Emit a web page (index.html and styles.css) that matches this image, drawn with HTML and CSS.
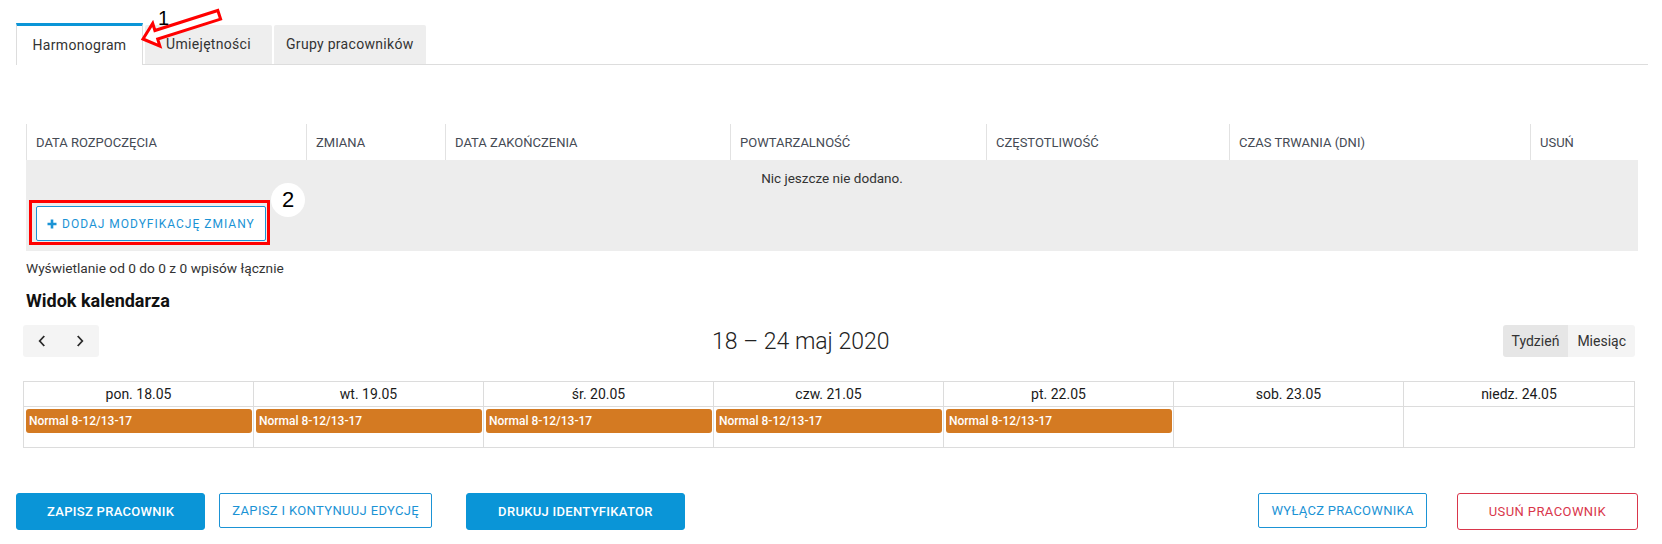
FILE: index.html
```html
<!DOCTYPE html>
<html lang="pl">
<head>
<meta charset="utf-8">
<title>Pracownik – harmonogram</title>
<link rel="stylesheet" href="styles.css">
</head>
<body>
<div class="page">
  <nav class="tabs">
    <a class="tab active">Harmonogram</a>
    <a class="tab">Umiejętności</a>
    <a class="tab">Grupy pracowników</a>
  </nav>

  <section class="schedule">
    <div class="thead">
      <div class="th">DATA ROZPOCZĘCIA</div>
      <div class="th">ZMIANA</div>
      <div class="th">DATA ZAKOŃCZENIA</div>
      <div class="th">POWTARZALNOŚĆ</div>
      <div class="th">CZĘSTOTLIWOŚĆ</div>
      <div class="th">CZAS TRWANIA (DNI)</div>
      <div class="th">USUŃ</div>
    </div>
    <div class="tbody">
      <div class="empty">Nic jeszcze nie dodano.</div>
      <div class="add-row">
        <button class="btn-add"><svg class="plus" viewBox="0 0 10 10" width="10" height="10"><path d="M5 0.5V9.5M0.5 5H9.5" stroke="currentColor" stroke-width="2.6" fill="none"/></svg>DODAJ MODYFIKACJĘ ZMIANY</button>
        <span class="mark-box"></span>
        <span class="mark-num">2</span>
      </div>
    </div>
    <div class="info">Wyświetlanie od 0 do 0 z 0 wpisów łącznie</div>
  </section>

  <h2 class="cal-heading">Widok kalendarza</h2>

  <div class="toolbar">
    <div class="nav-group">
      <button class="nav-btn"><svg viewBox="0 0 8 12" width="8" height="12"><path d="M6.3 1L1.7 6L6.3 11" fill="none" stroke="#2b2b2b" stroke-width="1.8"/></svg></button>
      <button class="nav-btn"><svg viewBox="0 0 8 12" width="8" height="12"><path d="M1.7 1L6.3 6L1.7 11" fill="none" stroke="#2b2b2b" stroke-width="1.8"/></svg></button>
    </div>
    <div class="range">18 – 24 maj 2020</div>
    <div class="view-group">
      <button class="view-btn active">Tydzień</button>
      <button class="view-btn">Miesiąc</button>
    </div>
  </div>

  <div class="calendar">
    <div class="day-head">pon. 18.05</div>
    <div class="day-head">wt. 19.05</div>
    <div class="day-head">śr. 20.05</div>
    <div class="day-head">czw. 21.05</div>
    <div class="day-head">pt. 22.05</div>
    <div class="day-head">sob. 23.05</div>
    <div class="day-head">niedz. 24.05</div>
    <div class="day-cell"><div class="event">Normal 8-12/13-17</div></div>
    <div class="day-cell"><div class="event">Normal 8-12/13-17</div></div>
    <div class="day-cell"><div class="event">Normal 8-12/13-17</div></div>
    <div class="day-cell"><div class="event">Normal 8-12/13-17</div></div>
    <div class="day-cell"><div class="event">Normal 8-12/13-17</div></div>
    <div class="day-cell"></div>
    <div class="day-cell"></div>
  </div>

  <div class="actions">
    <div class="actions-left">
      <button class="btn primary">ZAPISZ PRACOWNIK</button>
      <button class="btn outline continue">ZAPISZ I KONTYNUUJ EDYCJĘ</button>
      <button class="btn primary print">DRUKUJ IDENTYFIKATOR</button>
    </div>
    <div class="actions-right">
      <button class="btn outline disable">WYŁĄCZ PRACOWNIKA</button>
      <button class="btn danger">USUŃ PRACOWNIK</button>
    </div>
  </div>

  <svg class="mark-arrow" viewBox="0 0 240 60" width="240" height="60"><polygon points="143,39 159.9,46.2 157.7,39.1 220.6,19.1 217.8,10.5 154.9,30.5 152.7,23.4" fill="#fff" stroke="#f00" stroke-width="3" stroke-linejoin="miter"/></svg>
  <span class="mark-one">1</span>
</div>
</body>
</html>
```

FILE: styles.css
```css
* {
  box-sizing: border-box;
}

body {
  margin: 0;
  background: #fff;
  color: #333;
  font-family: Roboto, "Noto Sans", Arial, sans-serif;
  font-size: 14px;
}

button {
  font: inherit;
  cursor: pointer;
}

.page {
  position: relative;
  padding: 23px 14px 0 16px;
}

/* Tabs */
.tabs {
  display: flex;
  align-items: flex-end;
  gap: 2px;
  border-bottom: 1px solid #ddd;
}

.tab {
  display: flex;
  align-items: center;
  justify-content: center;
  min-width: 127px;
  height: 39px;
  padding: 0 12px 1px;
  background: #eeeeee;
  color: #333;
  font-size: 14px;
  letter-spacing: 0.3px;
  border-radius: 2px 2px 0 0;
}

.tab.active {
  height: 42px;
  margin-bottom: -1px;
  padding-bottom: 2px;
  background: #fff;
  border-top: 3px solid #0a95d7;
  border-left: 1px solid #ddd;
  border-right: 1px solid #ddd;
  border-radius: 0;
}

/* Schedule table */
.schedule {
  margin: 59px 10px 0 10px;
}

.thead {
  display: grid;
  grid-template-columns: 280px 139px 285px 256px 243px 301px 108px;
  height: 36px;
}

.th {
  display: flex;
  align-items: center;
  padding: 0 9px;
  border-left: 1px solid #e2e2e2;
  color: #454a54;
  font-size: 13px;
}

.tbody {
  background: #ededed;
  padding-top: 10px;
}

.empty {
  text-align: center;
  line-height: 17px;
  font-size: 13.5px;
  color: #333;
}

.add-row {
  position: relative;
  margin-top: 19px;
  padding: 0 10px 10px;
}

.btn-add {
  display: inline-flex;
  align-items: center;
  gap: 5px;
  width: 230px;
  height: 35px;
  padding: 0 10px;
  background: #fff;
  border: 1px solid #1b93d5;
  border-radius: 2px;
  color: #1b93d5;
  font-size: 12px;
  letter-spacing: 1px;
}

.plus {
  display: block;
}

.mark-box {
  position: absolute;
  left: 3px;
  top: -6px;
  width: 241px;
  height: 45px;
  border: 3px solid #f00;
}

.mark-num {
  position: absolute;
  left: 245px;
  top: -23px;
  width: 34px;
  height: 34px;
  border-radius: 50%;
  background: #fff;
  display: flex;
  align-items: center;
  justify-content: center;
  font-family: "Liberation Sans", Arial, sans-serif;
  font-size: 22px;
  color: #000;
}

.info {
  margin-top: 7px;
  line-height: 20px;
  font-size: 13.7px;
  color: #333;
}

/* Calendar */
.cal-heading {
  margin: 11px 0 0 10px;
  font-size: 18px;
  line-height: 24px;
  font-weight: 700;
  color: #111;
}

.toolbar {
  display: flex;
  align-items: center;
  justify-content: space-between;
  margin: 12px 13px 0 7px;
  height: 32px;
}

.nav-group,
.view-group {
  display: flex;
  border-radius: 3px;
  overflow: hidden;
}

.nav-btn {
  display: flex;
  align-items: center;
  justify-content: center;
  width: 38px;
  height: 32px;
  padding: 0;
  border: 0;
  background: #f4f4f4;
}

.range {
  font-size: 23px;
  font-weight: 300;
  color: #222;
}

.view-btn {
  height: 32px;
  padding: 0 9px;
  border: 0;
  background: #f4f4f4;
  color: #333;
  font-size: 14px;
}

.view-btn.active {
  background: #e6e6e6;
}

.calendar {
  display: grid;
  grid-template-columns: repeat(7, 1fr);
  width: 1612px;
  margin: 24px 0 0 7px;
  border: 1px solid #dcdcdc;
}

.day-head {
  height: 25px;
  display: flex;
  align-items: center;
  justify-content: center;
  border-right: 1px solid #dcdcdc;
  border-bottom: 1px solid #dcdcdc;
  font-size: 14px;
  color: #1a1a1a;
}

.day-cell {
  height: 40px;
  padding: 2px 1px 0 2px;
  border-right: 1px solid #dcdcdc;
}

.day-head:nth-child(7),
.day-cell:last-child {
  border-right: 0;
}

.event {
  height: 24px;
  display: flex;
  align-items: center;
  padding: 0 3px;
  background: #d47a22;
  border-radius: 3px;
  color: #fff;
  font-size: 12px;
  font-weight: 500;
}

/* Actions */
.actions {
  display: flex;
  justify-content: space-between;
  align-items: flex-start;
  margin: 45px 10px 0 0;
}

.actions-left,
.actions-right {
  display: flex;
  align-items: flex-start;
}

.btn {
  height: 37px;
  padding: 0 30px;
  border-radius: 3px;
  font-size: 13px;
  font-weight: 500;
  letter-spacing: 0.3px;
}

.btn.primary {
  background: #0a95d7;
  border: 1px solid #0a95d7;
  color: #fff;
}

.btn.outline {
  height: 35px;
  padding: 0 12px;
  background: #fff;
  border: 1px solid #1b93d5;
  border-radius: 2px;
  color: #1b93d5;
  font-weight: 400;
}

.btn.continue {
  margin-left: 14px;
  letter-spacing: 0.35px;
}

.btn.print {
  margin-left: 34px;
  padding: 0 31px;
}

.btn.disable {
  letter-spacing: 0.3px;
}

.btn.danger {
  margin-left: 30px;
  padding: 0 31px;
  background: #fff;
  border: 1px solid #d9364b;
  color: #d9364b;
  font-weight: 400;
  letter-spacing: 0.4px;
}

/* Annotations */
.mark-arrow {
  position: absolute;
  left: 0;
  top: 0;
  pointer-events: none;
}

.mark-one {
  position: absolute;
  left: 158px;
  top: 8px;
  font-family: "Liberation Sans", Arial, sans-serif;
  font-size: 20px;
  line-height: 20px;
  color: #000;
}
```
